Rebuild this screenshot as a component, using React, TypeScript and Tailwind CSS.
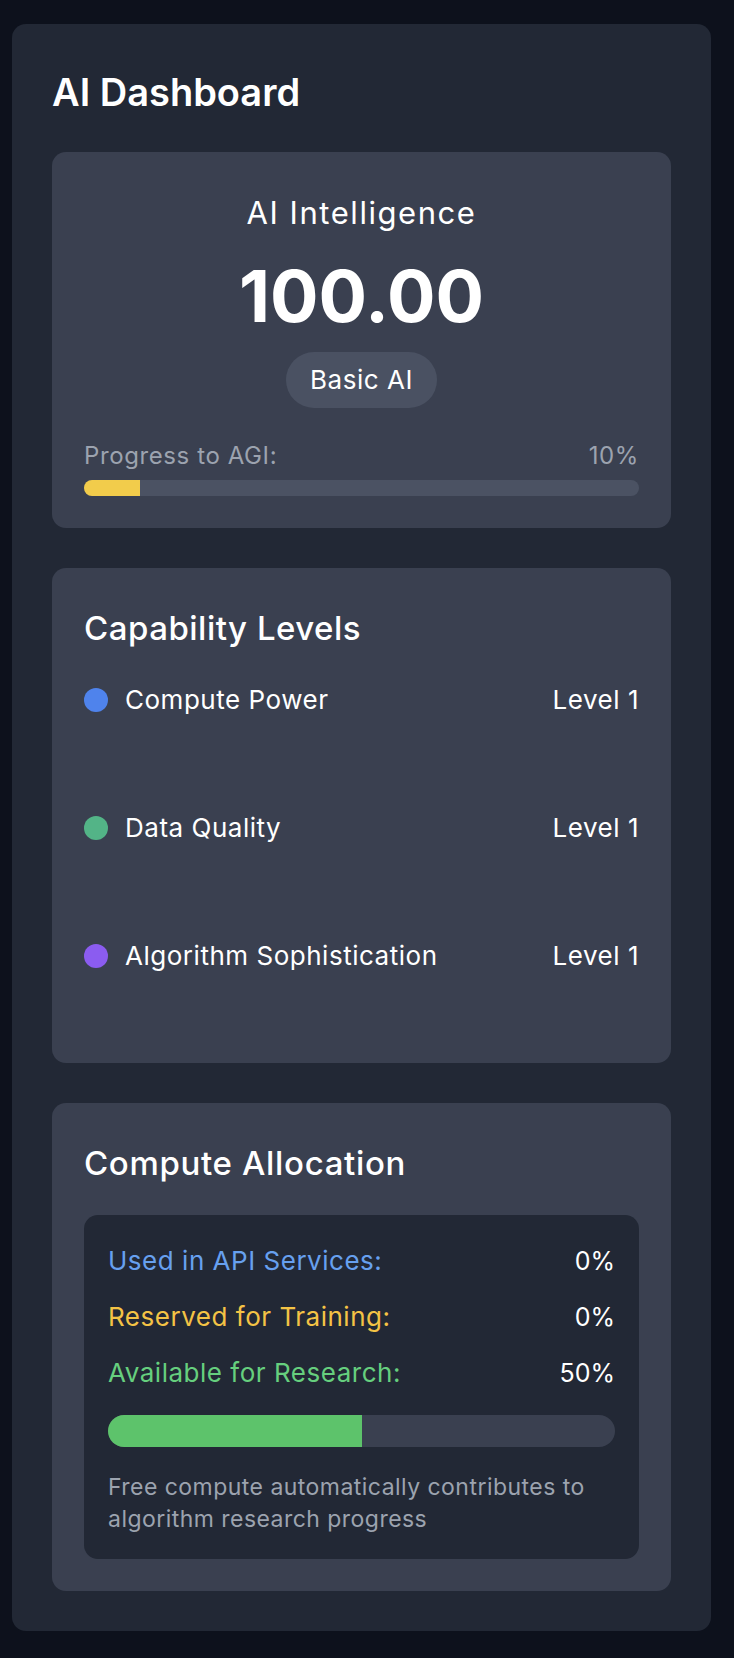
import React from 'react';

interface Capability {
  name: string;
  level: number;
  dot: string;
}

const capabilities: Capability[] = [
  { name: 'Compute Power', level: 1, dot: 'bg-[#4f83ec]' },
  { name: 'Data Quality', level: 1, dot: 'bg-[#53b487]' },
  { name: 'Algorithm Sophistication', level: 1, dot: 'bg-[#8b5cf0]' },
];

const allocation = [
  { label: 'Used in API Services:', value: 0, color: 'text-[#67a0ef]' },
  { label: 'Reserved for Training:', value: 0, color: 'text-[#f4c345]' },
  { label: 'Available for Research:', value: 50, color: 'text-[#66cf7e]' },
];

function IntelligenceCard() {
  const progress = 10;
  return (
    <div className="rounded-[14px] bg-[#3a4050] px-8 pt-[43px] pb-8 text-center">
      <div className="text-[31px] leading-[36px] tracking-[0.05em] text-white">AI Intelligence</div>
      <div className="mt-[29px] text-[72px] leading-[72px] font-bold text-white">100.00</div>
      <div className="mt-5 flex justify-center">
        <span className="rounded-full bg-[#4a5162] px-6 py-3 text-[26px] leading-[32px] tracking-[0.02em] text-white">Basic AI</span>
      </div>
      <div className="mt-8 flex justify-between text-[24px] leading-[32px] tracking-[0.025em] text-[#9ca3af]">
        <span>Progress to AGI:</span>
        <span>{progress}%</span>
      </div>
      <div className="mt-2 h-4 w-full overflow-hidden rounded-full bg-[#4b5263]">
        <div className="h-full bg-[#f2cc4b]" style={{ width: `${progress}%` }} />
      </div>
    </div>
  );
}

function CapabilityCard() {
  return (
    <div className="rounded-[14px] bg-[#3a4050] px-8 pt-10 pb-8">
      <h2 className="text-[33px] leading-[40px] tracking-[0.015em] font-medium text-white">Capability Levels</h2>
      <div className="mt-9 flex flex-col gap-[37px]">
        {capabilities.map((c) => (
          <div key={c.name} className="h-[91px]">
            <div className="flex items-center justify-between text-[26px] leading-[32px] tracking-[0.02em] text-white">
              <div className="flex items-center gap-[17px]">
                <span className={`h-6 w-6 rounded-full ${c.dot}`} />
                <span>{c.name}</span>
              </div>
              <span>Level {c.level}</span>
            </div>
          </div>
        ))}
      </div>
    </div>
  );
}

function AllocationCard() {
  const research = 50;
  return (
    <div className="rounded-[14px] bg-[#3a4050] px-8 pt-10 pb-8">
      <h2 className="text-[33px] leading-[40px] tracking-[0.02em] font-medium text-white">Compute Allocation</h2>
      <div className="mt-8 rounded-[14px] bg-[#222835] px-6 pt-7 pb-6">
        <div className="flex flex-col gap-5">
          {allocation.map((a) => (
            <div key={a.label} className="flex justify-between text-[26px] leading-[36px]">
              <span className={`tracking-[0.02em] ${a.color}`}>{a.label}</span>
              <span className="text-[25px] text-white">{a.value}%</span>
            </div>
          ))}
        </div>
        <div className="mt-6 h-8 w-full overflow-hidden rounded-full bg-[#3a4050]">
          <div className="h-full bg-[#5dc36b]" style={{ width: `${research}%` }} />
        </div>
        <p className="mt-6 text-[23px] leading-[32px] tracking-[0.02em] text-[#9ca3af]">
          Free compute automatically contributes to algorithm research progress
        </p>
      </div>
    </div>
  );
}

export default function App() {
  return (
    <div className="min-h-screen bg-[#0d111c] px-3 pt-6 pb-[27px] font-[Inter,sans-serif]">
      <div className="w-[699px] rounded-[14px] bg-[#222835] px-10 pt-[46px] pb-10">
        <h1 className="mb-[38px] text-[38px] leading-[44px] font-semibold text-white">AI Dashboard</h1>
        <div className="flex flex-col gap-10">
          <IntelligenceCard />
          <CapabilityCard />
          <AllocationCard />
        </div>
      </div>
    </div>
  );
}
